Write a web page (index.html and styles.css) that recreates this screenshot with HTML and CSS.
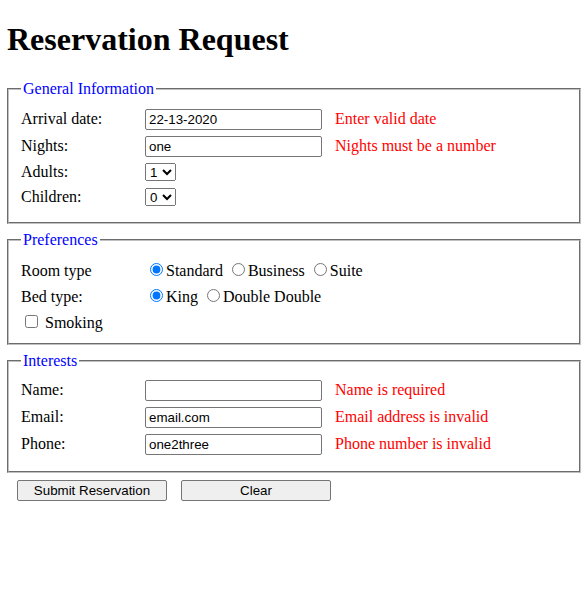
FILE: index.html
```
<!DOCTYPE html>
<html>
<head>
<meta charset="utf-8">
<title>Reservation Request</title>
<link rel="stylesheet" href="styles.css">
</head>
<body>
<h1 class="title">Reservation Request</h1>
<form class="form">
  <fieldset class="group group-general">
    <legend class="legend">General Information</legend>
    <div class="row row-input">
      <label class="label">Arrival date:</label>
      <input class="text" type="text" value="22-13-2020">
      <span class="error">Enter valid date</span>
    </div>
    <div class="row row-input">
      <label class="label">Nights:</label>
      <input class="text" type="text" value="one">
      <span class="error">Nights must be a number</span>
    </div>
    <div class="row row-select">
      <label class="label">Adults:</label>
      <select class="select"><option>1</option><option>2</option><option>3</option><option>4</option></select>
    </div>
    <div class="row row-select">
      <label class="label">Children:</label>
      <select class="select"><option>0</option><option>1</option><option>2</option><option>3</option></select>
    </div>
  </fieldset>

  <fieldset class="group group-prefs">
    <legend class="legend">Preferences</legend>
    <div class="row row-pref">
      <label class="label">Room type</label>
      <span class="choices"><input class="radio" type="radio" name="room" checked>Standard <input class="radio" type="radio" name="room">Business <input class="radio" type="radio" name="room">Suite</span>
    </div>
    <div class="row row-pref">
      <label class="label">Bed type:</label>
      <span class="choices"><input class="radio" type="radio" name="bed" checked>King <input class="radio" type="radio" name="bed">Double Double</span>
    </div>
    <div class="row row-last">
      <label class="check-label"><input class="check" type="checkbox"> Smoking</label>
    </div>
  </fieldset>

  <fieldset class="group group-interests">
    <legend class="legend">Interests</legend>
    <div class="row row-input">
      <label class="label">Name:</label>
      <input class="text" type="text" value="">
      <span class="error">Name is required</span>
    </div>
    <div class="row row-input">
      <label class="label">Email:</label>
      <input class="text" type="text" value="email.com">
      <span class="error">Email address is invalid</span>
    </div>
    <div class="row row-input">
      <label class="label">Phone:</label>
      <input class="text" type="text" value="one2three">
      <span class="error">Phone number is invalid</span>
    </div>
  </fieldset>

  <div class="buttons">
    <button class="button" type="button">Submit Reservation</button>
    <button class="button" type="button">Clear</button>
  </div>
</form>
</body>
</html>
```

FILE: styles.css
```
html, body {
  background: #ffffff;
}
body {
  margin: 0 7px;
  font-family: "Liberation Serif", "Times New Roman", serif;
  font-size: 16px;
  color: #000000;
}
.title {
  font-size: 32px;
  font-weight: bold;
  margin: 21.44px 0;
  padding-top: 0;
}
.form {
  margin: 0;
}
.group {
  margin: 0 0 7px 0;
  padding: 10.5px 12px 9.5px 12px;
  border: 2px groove rgb(192, 192, 192);
  min-width: 0;
}
.group-general {
  padding-top: 11px;
  padding-bottom: 9.5px;
}
.group-prefs {
  padding-bottom: 12px;
}
.legend {
  color: #0000ff;
  padding: 0 2px;
  font-size: 16px;
}
.row {
  display: flex;
  align-items: baseline;
}
.row-input {
  height: 27px;
}
.row-select {
  height: 25px;
}
.row-pref {
  height: 26px;
}
.row-last {
  height: 19px;
}
.label {
  width: 124px;
  flex: none;
}
.text {
  box-sizing: border-box;
  width: 177px;
  height: 21px;
  margin: 0;
  padding: 1px 3px;
  border: 1px solid #767676;
  border-radius: 2px;
  font-family: "Liberation Sans", Arial, sans-serif;
  font-size: 13.333px;
  color: #000000;
  flex: none;
}
.select {
  margin: 0;
  height: 18px;
  width: 31px;
  font-family: "Liberation Sans", Arial, sans-serif;
  font-size: 13.333px;
  flex: none;
}
.error {
  color: #ff0000;
  margin-left: 13px;
  white-space: nowrap;
}
.choices {
  white-space: nowrap;
}
.radio {
  margin: 3px 3px 0 5px;
}
.check {
  margin: 3px 3px 3px 4px;
}
.buttons {
  display: flex;
  gap: 14px;
  padding-left: 10px;
  margin-top: 0;
}
.button {
  box-sizing: border-box;
  width: 150px;
  height: 21px;
  margin: 0;
  padding: 1px 6px;
  font-family: "Liberation Sans", Arial, sans-serif;
  font-size: 13.333px;
  color: #000000;
  background: #efefef;
  border: 1px solid #767676;
  border-radius: 2px;
}
```
